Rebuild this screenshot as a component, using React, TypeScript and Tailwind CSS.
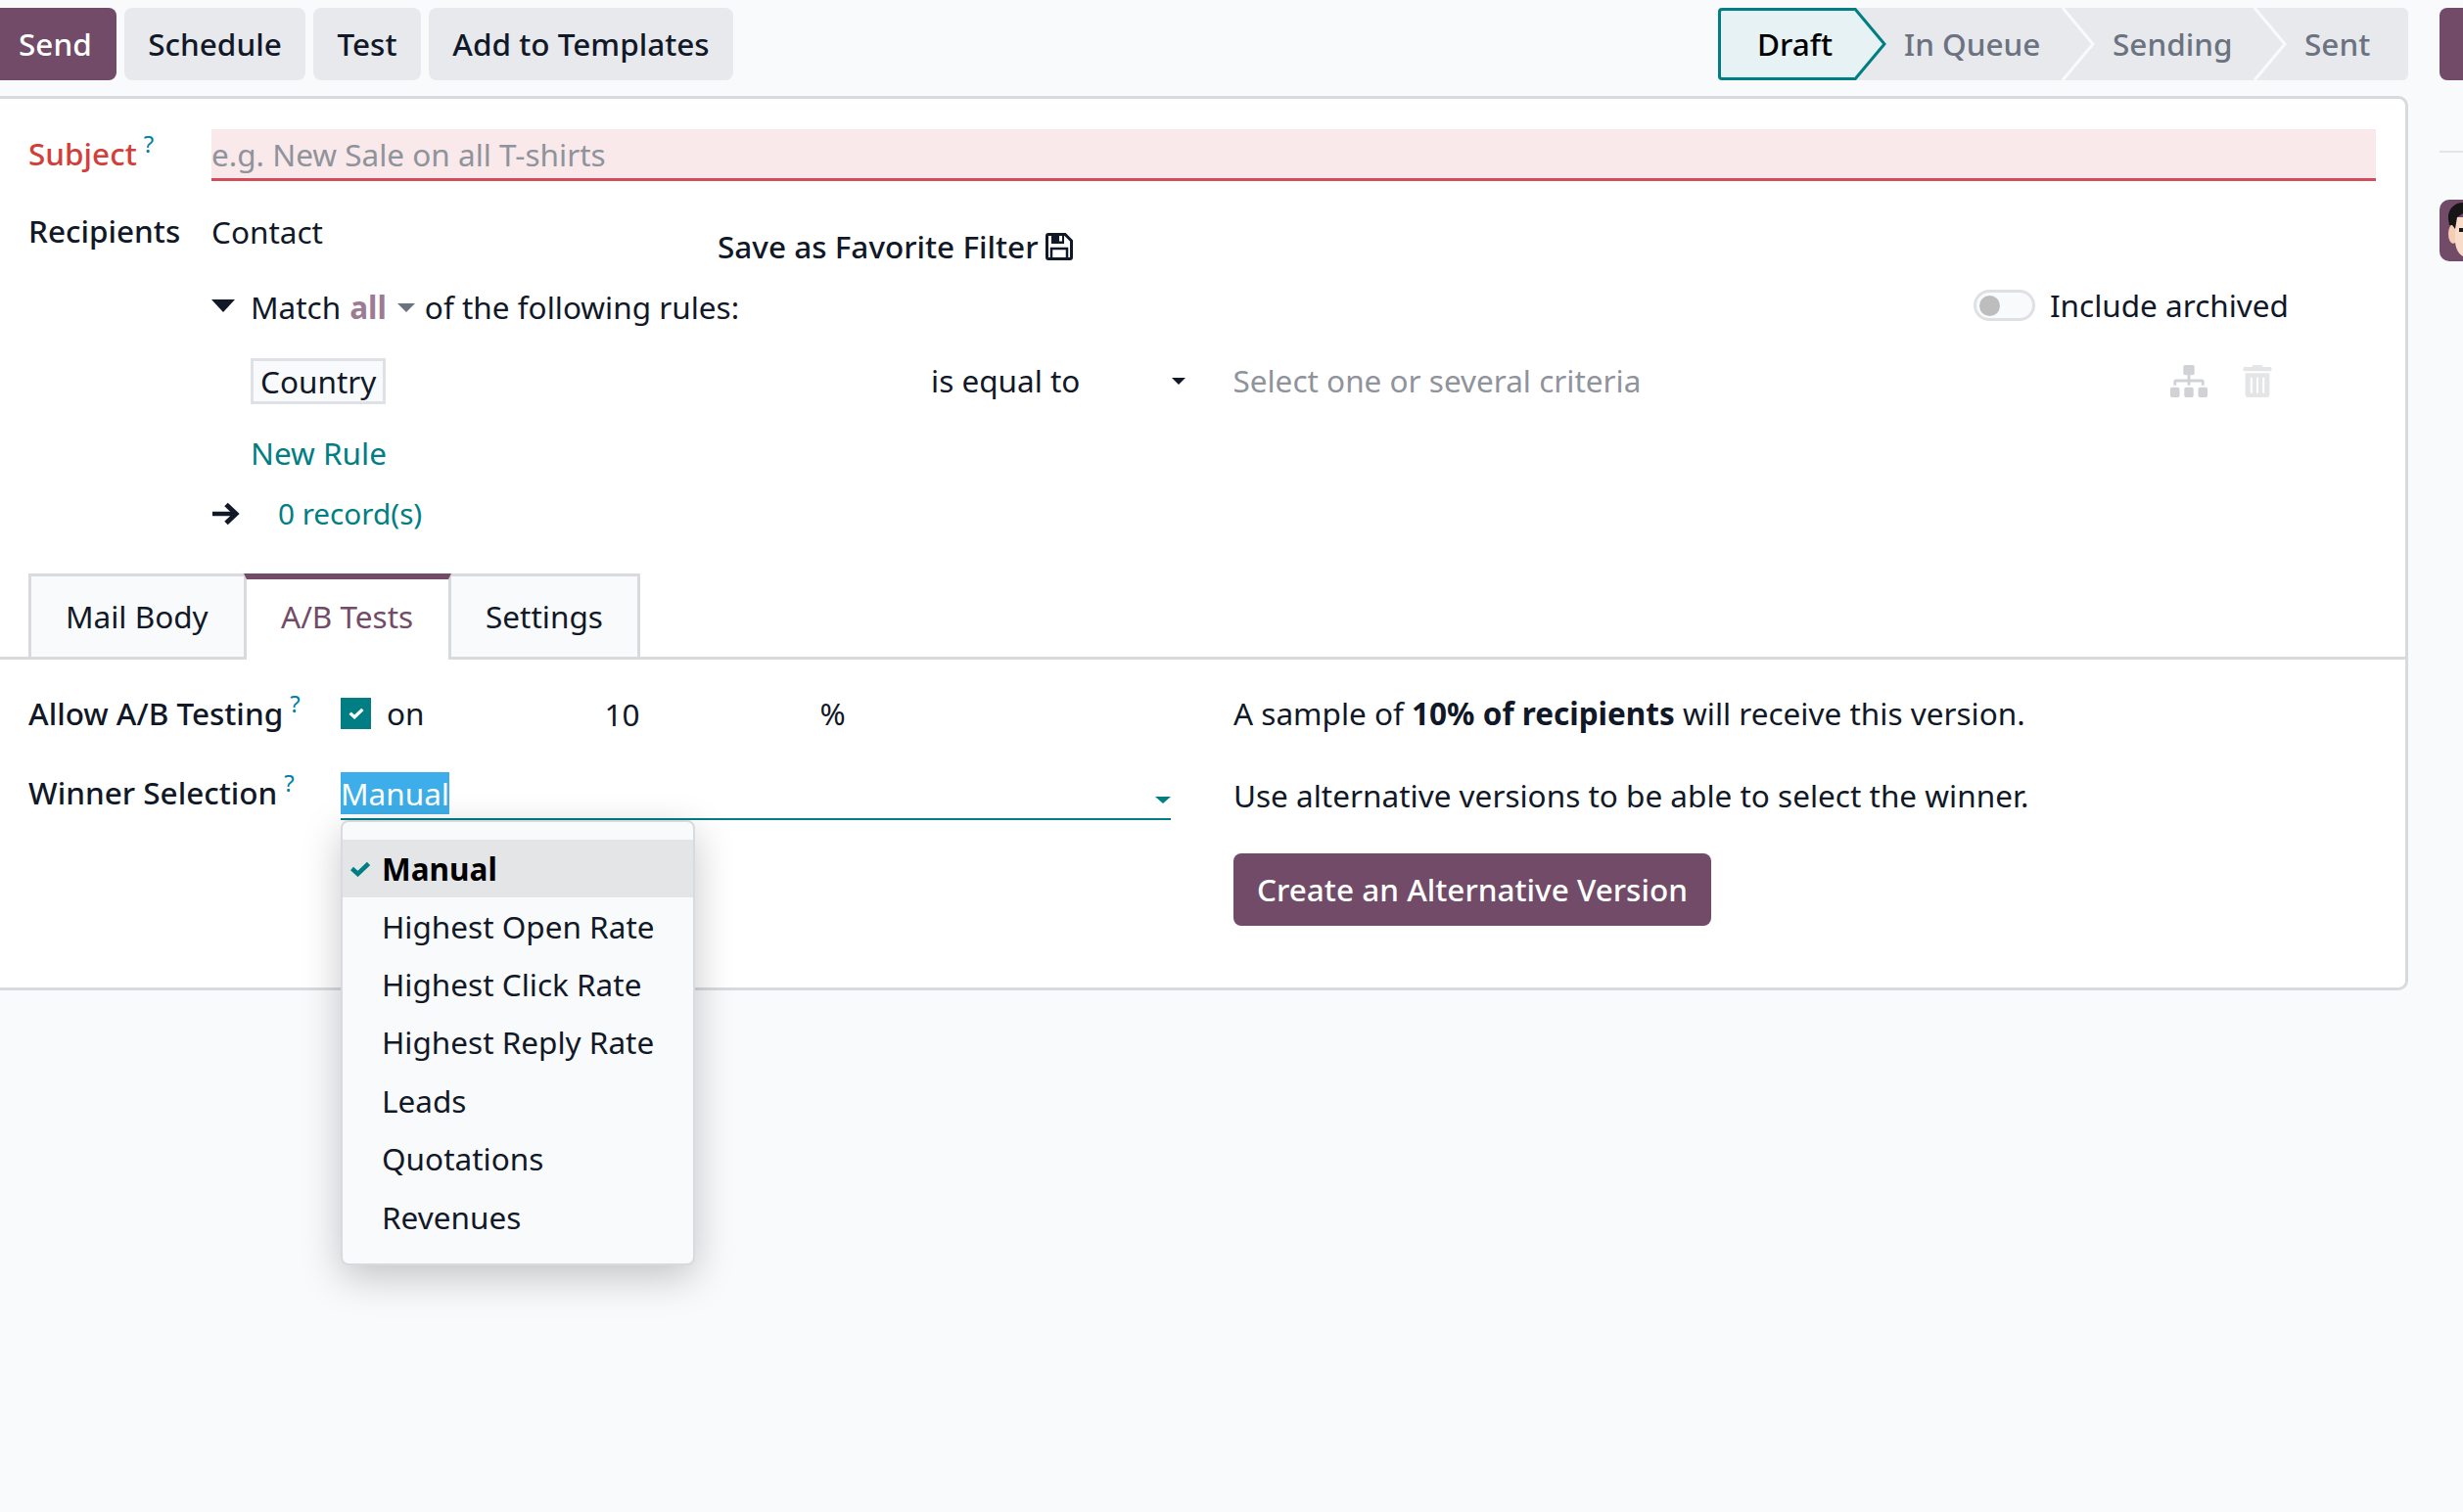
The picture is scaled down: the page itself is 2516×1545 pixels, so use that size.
import { FaSitemap, FaTrashAlt } from 'react-icons/fa';

const Chevron = ({ className, stroke, fill }: { className: string; stroke: string; fill: string }) => (
  <svg className={className} width="34" height="74" viewBox="0 0 34 74" fill="none">
    <path d="M1 0 L32 37 L1 74" fill={fill} stroke={stroke} strokeWidth="3" />
  </svg>
);

const Help = () => (
  <sup className="ml-[7px] text-[24px] font-normal text-[#0180a5] leading-none relative -top-[13px]">?</sup>
);

const Caret = ({ className }: { className: string }) => (
  <span className={`inline-block w-0 h-0 border-x-[7px] border-x-transparent border-t-[7px] ${className}`} />
);

const Check = ({ className }: { className: string }) => (
  <svg className={className} viewBox="0 0 20 16" fill="none" stroke="currentColor" strokeWidth="4.5">
    <path d="M1.5 7.5 L7.5 13 L18.5 2.5" />
  </svg>
);

const Floppy = () => (
  <svg width="28" height="28" viewBox="0 0 28 28" className="shrink-0">
    <path d="M3 1.5 H20 L26.5 8 V25 Q26.5 26.5 25 26.5 H3 Q1.5 26.5 1.5 25 V3 Q1.5 1.5 3 1.5Z" fill="none" stroke="#111827" strokeWidth="3" />
    <path d="M6 1 H19 V11 H6Z" fill="#111827" />
    <rect x="14" y="3" width="3" height="5.5" fill="#fff" />
    <path d="M6 26 V16 H22 V26" fill="none" stroke="#111827" strokeWidth="2.5" />
  </svg>
);

const OPTIONS = ['Highest Open Rate', 'Highest Click Rate', 'Highest Reply Rate', 'Leads', 'Quotations', 'Revenues'];

const App = () => {
  return (
    <div className="w-[2516px] h-[1545px] overflow-hidden flex bg-[#f9fafb] text-[31.5px] leading-[48px] text-[#111827] font-['Noto_Sans',sans-serif]">
      <div className="w-[2460px] shrink-0">
        {/* control panel */}
        <div className="h-[98px] pt-[8px] flex justify-between font-medium">
          <div className="flex gap-[8px] h-[74px]">
            <button className="w-[119px] pl-[19px] text-left rounded-r-[8px] bg-[#714b67] text-white">Send</button>
            <button className="w-[185px] rounded-[8px] bg-[#e7e9ed]">Schedule</button>
            <button className="w-[110px] rounded-[8px] bg-[#e7e9ed]">Test</button>
            <button className="w-[311px] rounded-[8px] bg-[#e7e9ed]">Add to Templates</button>
          </div>
          <div className="relative flex w-[705px] h-[74px] rounded-[6px] bg-[#e7e9ed] text-[#6b7280]">
            <div className="w-[139px] pl-[40px] leading-[74px] bg-[#e6f2f3] text-black border-y-[3px] border-l-[3px] border-[#017e84] rounded-l-[4px]">
              <span className="relative -top-[3px] -left-[3px]">Draft</span>
            </div>
            <Chevron className="absolute left-[138px] top-0" stroke="#017e84" fill="#e6f2f3" />
            <div className="w-[212px] pl-[51px] leading-[74px]">In Queue</div>
            <Chevron className="absolute left-[351px] top-0" stroke="#f9fafb" fill="none" />
            <div className="w-[196px] pl-[52px] leading-[74px]">Sending</div>
            <Chevron className="absolute left-[547px] top-0" stroke="#f9fafb" fill="none" />
            <div className="flex-1 pl-[52px] leading-[74px]">Sent</div>
          </div>
        </div>

        {/* form sheet */}
        <div className="h-[914px] bg-white border-y-[3px] border-r-[3px] border-[#d8dadd] rounded-r-[10px]">
          <div className="pl-[29px] pr-[30px]">
            <div className="flex pt-[31px] h-[85px]">
              <div className="w-[187px] shrink-0 pt-[2px] font-medium text-[#d23f3a] leading-[46px]">Subject<Help /></div>
              <div className="flex-1 h-[53px] pt-[1px] leading-[50px] bg-[#f9e9ea] border-b-[3px] border-[#d44c59] text-[#8f939b]">e.g. New Sale on all T-shirts</div>
            </div>
            <div className="flex">
              <div className="w-[187px] shrink-0 pt-[26px] font-medium">Recipients</div>
              <div className="flex-1">
                <div className="flex pt-[27px] h-[88px]">
                  <span className="w-[517px]">Contact</span>
                  <span className="flex items-center h-[48px] mt-[15px] gap-[7px] font-medium">Save as Favorite Filter <Floppy /></span>
                </div>
                <div className="flex items-center h-[48px] mt-[16px] relative">
                  <Caret className="border-x-[12px]! border-t-[13px]! border-t-[#111827] mr-[16px] -mt-[4px]" />
                  <span className="mr-[9px]">Match</span>
                  <span className="font-bold text-[#9c7b94] mr-[11px]">all</span>
                  <Caret className="border-t-[#6b7280] border-x-[9px]! border-t-[9px]! mr-[10px]" />
                  <span>of the following rules:</span>
                  <div className="ml-auto flex items-center mr-[89px] -mt-[4px]">
                    <span className="w-[63px] h-[32px] rounded-full border-[3px] border-[#dfe0e3] bg-[#f9fafb] flex items-center pl-[3px] mr-[15px]">
                      <span className="w-[21px] h-[21px] rounded-full bg-[#bdbdbd]" />
                    </span>
                    <span>Include archived</span>
                  </div>
                </div>
                <div className="flex items-center pl-[40px] mt-[28px] h-[47px]">
                  <span className="w-[138px] h-[47px] px-[7px] leading-[42px] bg-[#f9fafb] border-[3px] border-[#dee2e6]">Country</span>
                  <span className="ml-[557px] -mt-[2px]">is equal to</span>
                  <Caret className="ml-[94px] border-t-[#111827]" />
                  <span className="ml-[48px] -mt-[1px] text-[#8f939b]">Select one or several criteria</span>
                  <FaSitemap preserveAspectRatio="none" className="ml-[541px] w-[38px] h-[33px] text-[#d0d2d6]" />
                  <FaTrashAlt className="ml-[36px] w-[30px] h-[33px] text-[#e4e5e7]" />
                </div>
                <div className="pl-[40px] mt-[26px] text-[#017e84]">New Rule</div>
                <div className="flex items-center mt-[14px] h-[48px]">
                  <svg width="28" height="24" viewBox="0 0 28 24" fill="none" stroke="#111827" className="ml-[1px] shrink-0">
                    <path d="M0 12 H23" strokeWidth="4.5" />
                    <path d="M14 2.5 L24 12 L14 21.5" strokeWidth="5" />
                  </svg>
                  <span className="ml-[39px] text-[29.7px] text-[#017e84]">0 record(s)</span>
                </div>
              </div>
            </div>
          </div>

          {/* notebook */}
          <div className="mt-[37px] flex h-[88px] pl-[29px] border-b-[3px] border-[#d8dadd]">
            <div className="w-[220px] h-[85px] pl-[35px] pt-[17px] bg-[#f9fafb] border-[3px] border-r-0 border-b-0 border-[#d8dadd]">Mail Body</div>
            <div className="w-[212px] h-[88px] pl-[35px] pt-[14px] bg-white border-x-[3px] border-t-[6px] border-[#d8dadd] border-t-[#714b67] text-[#714b67]">A/B Tests</div>
            <div className="w-[193px] h-[85px] pl-[35px] pt-[17px] bg-[#f9fafb] border-t-[3px] border-r-[3px] border-[#d8dadd]">Settings</div>
          </div>

          <div className="pl-[29px] pt-[31px] flex">
            <div className="w-[319px] shrink-0 font-medium">
              <div className="h-[48px]">Allow A/B Testing<Help /></div>
              <div className="h-[48px] mt-[33px]">Winner Selection<Help /></div>
            </div>
            <div className="w-[848px] shrink-0 relative">
              <div className="flex items-center h-[48px]">
                <span className="w-[31px] h-[32px] bg-[#017e84] flex items-center justify-center mr-[16px]">
                  <Check className="w-[16px] h-[12px] text-white" />
                </span>
                <span>on</span>
                <span className="ml-[184px] pt-[2px]">10</span>
                <span className="ml-[184px]">%</span>
              </div>
              <div className="flex items-end h-[52px] mt-[33px] -mb-[12px] border-b-[2px] border-[#017e84] relative">
                <span className="bg-[#3daee9] text-white leading-[43px] mb-[4px]">Manual</span>
                <Caret className="absolute right-0 top-[28px] border-x-[8px]! border-t-[7px]! border-t-[#017e84]" />
              </div>
              {/* dropdown */}
              <div className="absolute left-0 top-[133px] w-[362px] h-[455px] py-[18px] z-10 bg-[#f9fafb] border-[2px] border-[#d8dadd] rounded-[8px] shadow-[0_12px_40px_rgba(0,0,0,0.22)]">
                <div className="relative h-[59px] pl-[40px] flex items-center bg-[#e4e5e7] text-black font-bold">
                  <Check className="absolute left-[8px] w-[20px] h-[16px] text-[#017e84]" />
                  Manual
                </div>
                {OPTIONS.map((o) => (
                  <div key={o} className="h-[59.4px] pl-[40px] flex items-center">{o}</div>
                ))}
              </div>
            </div>
            <div className="pl-[64px]">
              <div className="h-[48px]">A sample of <b className="font-bold">10% of recipients</b> will receive this version.</div>
              <div className="h-[48px] mt-[36px]">Use alternative versions to be able to select the winner.</div>
              <button className="block mt-[35px] w-[488px] h-[74px] rounded-[8px] bg-[#714b67] text-white font-medium">Create an Alternative Version</button>
            </div>
          </div>
        </div>
      </div>

      {/* chatter */}
      <div className="flex-1 ml-[32px] pt-[8px]">
        <div className="h-[74px] bg-[#714b67] rounded-l-[8px]" />
        <div className="mt-[72px] h-[2px] bg-[#e4e5e7]" />
        <div className="mt-[48px] w-[24px] h-[63px] overflow-hidden rounded-l-[10px] bg-[#714b67]">
          <svg width="24" height="63" viewBox="0 0 24 63">
            <ellipse cx="14" cy="35" rx="5" ry="10" fill="#f3cdb4" />
            <path d="M16 18 L24 18 V58 C20 56 16 50 16 42Z" fill="#f8dcc9" />
            <path d="M9 20 C8 9 16 3 24 3 V14 L18 18 L16 30 L13 26 L10 26Z" fill="#161616" />
            <path d="M20 29 H24 V33 H20Z" fill="#161616" />
          </svg>
        </div>
      </div>
    </div>
  );
};

export default App;
